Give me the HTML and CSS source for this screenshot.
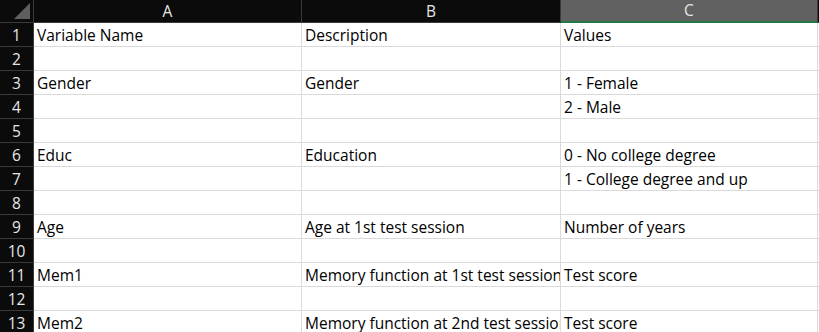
FILE: index.html
```html
<!DOCTYPE html>
<html lang="en">
<head>
  <meta charset="UTF-8">
  <title>Variables</title>
  <link rel="stylesheet" href="styles.css">
</head>
<body>
  <div class="sheet">
    <!-- column headers -->
    <div class="corner"><span class="tri"></span></div>
    <div class="colhead">A</div>
    <div class="colhead">B</div>
    <div class="colhead selected">C</div>
    <div class="colhead edge"></div>

    <div class="rowhead">1</div>
    <div class="cell">Variable Name</div>
    <div class="cell">Description</div>
    <div class="cell">Values</div>
    <div class="cell edge"></div>

    <div class="rowhead">2</div>
    <div class="cell"></div>
    <div class="cell"></div>
    <div class="cell"></div>
    <div class="cell edge"></div>

    <div class="rowhead">3</div>
    <div class="cell">Gender</div>
    <div class="cell">Gender</div>
    <div class="cell">1 - Female</div>
    <div class="cell edge"></div>

    <div class="rowhead">4</div>
    <div class="cell"></div>
    <div class="cell"></div>
    <div class="cell">2 - Male</div>
    <div class="cell edge"></div>

    <div class="rowhead">5</div>
    <div class="cell"></div>
    <div class="cell"></div>
    <div class="cell"></div>
    <div class="cell edge"></div>

    <div class="rowhead">6</div>
    <div class="cell">Educ</div>
    <div class="cell">Education</div>
    <div class="cell">0 - No college degree</div>
    <div class="cell edge"></div>

    <div class="rowhead">7</div>
    <div class="cell"></div>
    <div class="cell"></div>
    <div class="cell">1 - College degree and up</div>
    <div class="cell edge"></div>

    <div class="rowhead">8</div>
    <div class="cell"></div>
    <div class="cell"></div>
    <div class="cell"></div>
    <div class="cell edge"></div>

    <div class="rowhead">9</div>
    <div class="cell">Age</div>
    <div class="cell">Age at 1st test session</div>
    <div class="cell">Number of years</div>
    <div class="cell edge"></div>

    <div class="rowhead">10</div>
    <div class="cell"></div>
    <div class="cell"></div>
    <div class="cell"></div>
    <div class="cell edge"></div>

    <div class="rowhead">11</div>
    <div class="cell">Mem1</div>
    <div class="cell">Memory function at 1st test session</div>
    <div class="cell">Test score</div>
    <div class="cell edge"></div>

    <div class="rowhead">12</div>
    <div class="cell"></div>
    <div class="cell"></div>
    <div class="cell"></div>
    <div class="cell edge"></div>

    <div class="rowhead">13</div>
    <div class="cell">Mem2</div>
    <div class="cell">Memory function at 2nd test session</div>
    <div class="cell">Test score</div>
    <div class="cell edge"></div>
  </div>
</body>
</html>
```

FILE: styles.css
```css
body {
  margin: 0;
  background: #fff;
  font-family: "Open Sans", "Liberation Sans", sans-serif;
  font-size: 15.5px;
  overflow: hidden;
}
.sheet {
  display: grid;
  grid-template-columns: 34px 268px 259px 257px 1fr;
  grid-template-rows: 23px;
  grid-auto-rows: 24px;
}
.corner {
  position: relative;
  background: #0b0b0b;
  border-right: 1px solid #3a3a3a;
  border-bottom: 1px solid #3a3a3a;
}
.tri {
  position: absolute;
  right: 3px;
  bottom: 3px;
  width: 0;
  height: 0;
  border-left: 16px solid transparent;
  border-bottom: 16px solid #5f5f5f;
}
.colhead {
  background: #0b0b0b;
  color: #e6e6e6;
  text-align: center;
  line-height: 22px;
  border-right: 1px solid #3a3a3a;
  border-bottom: 1px solid #3a3a3a;
}
.colhead.selected {
  background: #616161;
  border-bottom: 2px solid #1f7a45;
  line-height: 21px;
}
.colhead.edge {
  border-right: none;
}
.rowhead {
  background: #0b0b0b;
  color: #e6e6e6;
  text-align: center;
  line-height: 22px;
  padding-top: 1px;
  border-right: 1px solid #3a3a3a;
  border-bottom: 1px solid #3a3a3a;
}
.cell {
  color: #000;
  padding: 2px 3px 0;
  line-height: 21px;
  white-space: nowrap;
  overflow: hidden;
  border-right: 1px solid #dadada;
  border-bottom: 1px solid #dadada;
}
.cell.edge {
  border-right: none;
}
```
